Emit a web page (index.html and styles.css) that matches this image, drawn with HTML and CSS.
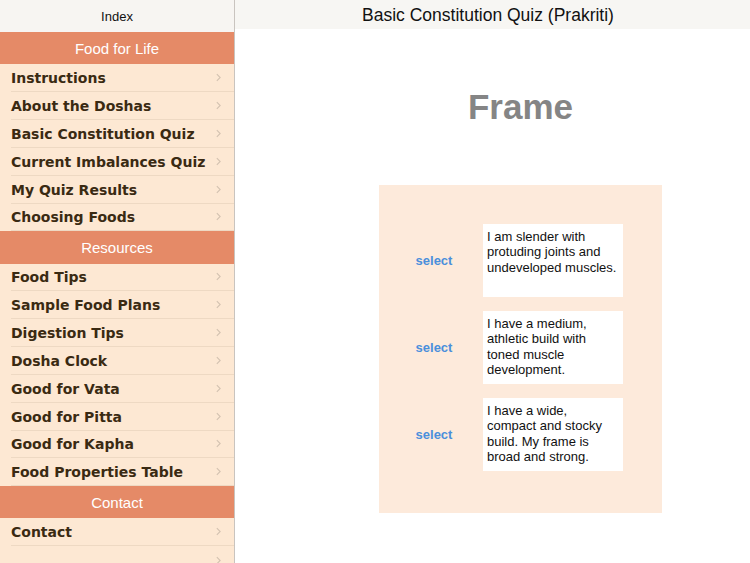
FILE: index.html
```html
<!DOCTYPE html>
<html>
<head>
<meta charset="utf-8">
<link rel="stylesheet" href="styles.css">
</head>
<body>
<div class="app">
  <aside class="sidebar">
    <div class="side-top">Index</div>
    <div class="section">Food for Life</div>
    <div class="row"><span>Instructions</span><svg class="chev" viewBox="0 0 6 10"><polyline points="1,1 5,5 1,9"/></svg></div>
    <div class="row"><span>About the Doshas</span><svg class="chev" viewBox="0 0 6 10"><polyline points="1,1 5,5 1,9"/></svg></div>
    <div class="row"><span>Basic Constitution Quiz</span><svg class="chev" viewBox="0 0 6 10"><polyline points="1,1 5,5 1,9"/></svg></div>
    <div class="row"><span>Current Imbalances Quiz</span><svg class="chev" viewBox="0 0 6 10"><polyline points="1,1 5,5 1,9"/></svg></div>
    <div class="row"><span>My Quiz Results</span><svg class="chev" viewBox="0 0 6 10"><polyline points="1,1 5,5 1,9"/></svg></div>
    <div class="row"><span>Choosing Foods</span><svg class="chev" viewBox="0 0 6 10"><polyline points="1,1 5,5 1,9"/></svg></div>
    <div class="section">Resources</div>
    <div class="row"><span>Food Tips</span><svg class="chev" viewBox="0 0 6 10"><polyline points="1,1 5,5 1,9"/></svg></div>
    <div class="row"><span>Sample Food Plans</span><svg class="chev" viewBox="0 0 6 10"><polyline points="1,1 5,5 1,9"/></svg></div>
    <div class="row"><span>Digestion Tips</span><svg class="chev" viewBox="0 0 6 10"><polyline points="1,1 5,5 1,9"/></svg></div>
    <div class="row"><span>Dosha Clock</span><svg class="chev" viewBox="0 0 6 10"><polyline points="1,1 5,5 1,9"/></svg></div>
    <div class="row"><span>Good for Vata</span><svg class="chev" viewBox="0 0 6 10"><polyline points="1,1 5,5 1,9"/></svg></div>
    <div class="row"><span>Good for Pitta</span><svg class="chev" viewBox="0 0 6 10"><polyline points="1,1 5,5 1,9"/></svg></div>
    <div class="row"><span>Good for Kapha</span><svg class="chev" viewBox="0 0 6 10"><polyline points="1,1 5,5 1,9"/></svg></div>
    <div class="row"><span>Food Properties Table</span><svg class="chev" viewBox="0 0 6 10"><polyline points="1,1 5,5 1,9"/></svg></div>
    <div class="section">Contact</div>
    <div class="row"><span>Contact</span><svg class="chev" viewBox="0 0 6 10"><polyline points="1,1 5,5 1,9"/></svg></div>
    <div class="row"><span></span><svg class="chev" viewBox="0 0 6 10"><polyline points="1,1 5,5 1,9"/></svg></div>
  </aside>
  <main class="detail">
    <div class="detail-top">Basic Constitution Quiz (Prakriti)</div>
    <div class="content">
      <h1 class="heading">Frame</h1>
      <div class="card">
        <div class="option">
          <span class="select">select</span>
          <div class="answer">I am slender with protuding joints and undeveloped muscles.</div>
        </div>
        <div class="option">
          <span class="select">select</span>
          <div class="answer">I have a medium, athletic build with toned muscle development.</div>
        </div>
        <div class="option">
          <span class="select">select</span>
          <div class="answer">I have a wide, compact and stocky build. My frame is broad and strong.</div>
        </div>
      </div>
    </div>
  </main>
</div>
</body>
</html>
```

FILE: styles.css
```css
html, body {
  margin: 0;
  padding: 0;
}
body {
  width: 750px;
  height: 563px;
  overflow: hidden;
  font-family: "Liberation Sans", Arial, sans-serif;
  background: #ffffff;
}
.app {
  display: flex;
  height: 563px;
}
.sidebar {
  width: 234px;
  flex: none;
  background: #fde8d3;
  border-right: 1px solid #c9c4bf;
  display: flex;
  flex-direction: column;
  overflow: hidden;
}
.side-top {
  height: 32.2px;
  flex: none;
  background: #f7f5f2;
  display: flex;
  align-items: center;
  justify-content: center;
  font-size: 13px;
  color: #111;
}
.section {
  height: 32.2px;
  flex: none;
  background: #e58a67;
  color: #fff;
  font-size: 15px;
  display: flex;
  align-items: center;
  justify-content: center;
}
.row {
  height: 27.83px;
  flex: none;
  box-sizing: border-box;
  margin-left: 11px;
  padding: 1px 13px 0 0;
  display: flex;
  align-items: center;
  justify-content: space-between;
  border-bottom: 1px solid #eed9c3;
  font-family: "DejaVu Sans", Verdana, sans-serif;
  font-weight: bold;
  font-size: 14px;
  color: #3a2a12;
}
.row:last-child {
  border-bottom: none;
}
.chev {
  width: 5px;
  height: 9px;
  margin-top: -1px;
  fill: none;
  stroke: #d3c2b0;
  stroke-width: 1.3;
}
.detail {
  flex: 1;
  display: flex;
  flex-direction: column;
}
.detail-top {
  height: 29px;
  flex: none;
  box-sizing: border-box;
  background: #f7f6f3;
  display: flex;
  align-items: center;
  justify-content: center;
  padding: 2px 9px 0 0;
  font-size: 17.5px;
  color: #111;
}
.content {
  margin-left: 144px;
  width: 283px;
}
.heading {
  margin: 58px 0 0;
  height: 40px;
  line-height: 40px;
  text-align: center;
  font-size: 35px;
  font-weight: bold;
  color: #858585;
}
.card {
  margin-top: 58px;
  height: 328px;
  box-sizing: border-box;
  background: #fdeadb;
  padding: 39px 39px 0 0;
  display: flex;
  flex-direction: column;
  gap: 14px;
}
.option {
  display: flex;
  align-items: center;
  height: 73px;
}
.select {
  width: 104px;
  text-align: center;
  font-size: 13px;
  font-weight: bold;
  color: #4a8fdc;
  padding-left: 6px;
  box-sizing: border-box;
}
.answer {
  width: 140px;
  height: 73px;
  box-sizing: border-box;
  background: #fff;
  padding: 5px 4px;
  font-size: 13px;
  line-height: 15.4px;
  color: #111;
}
```
